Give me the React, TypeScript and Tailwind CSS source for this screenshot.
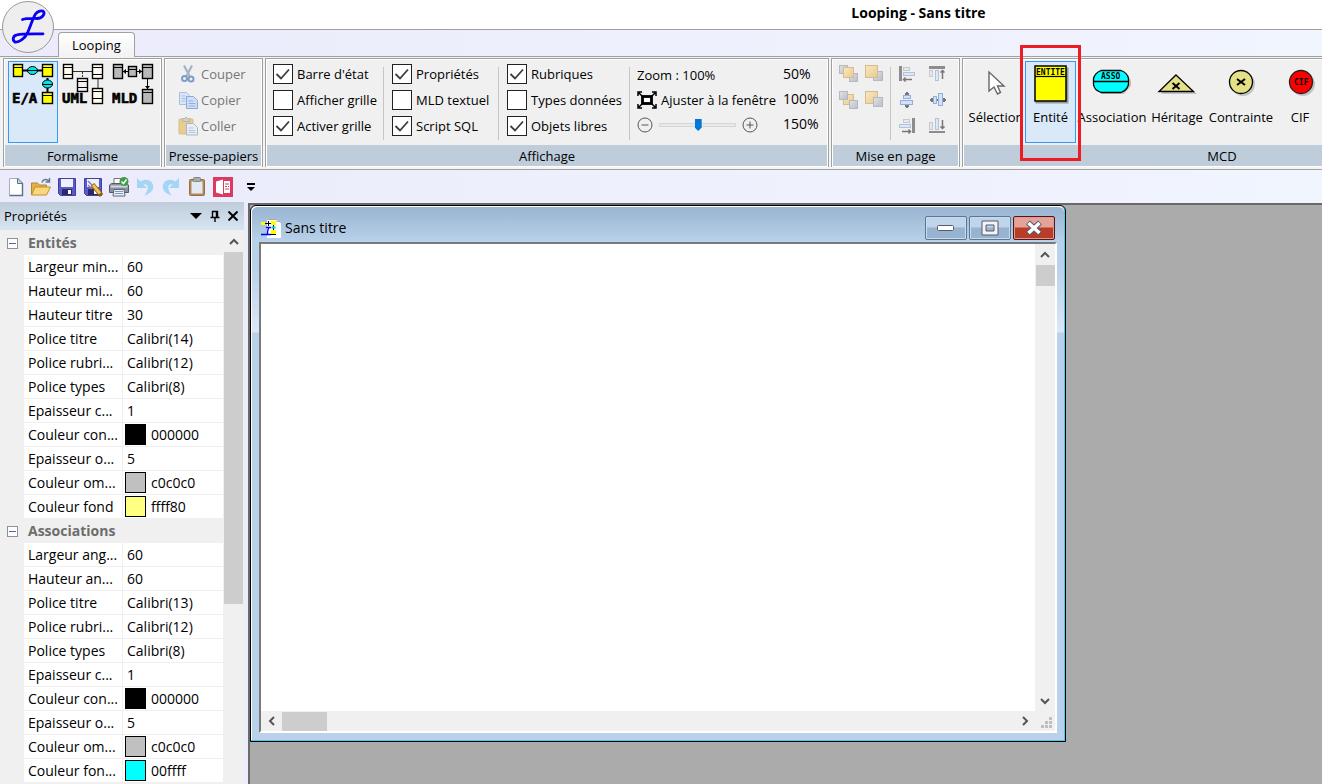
import type { ReactNode } from "react";

type Property = { name: string; value: string; color?: string };

const entites: Property[] = [
  { name: "Largeur min...", value: "60" },
  { name: "Hauteur mi...", value: "60" },
  { name: "Hauteur titre", value: "30" },
  { name: "Police titre", value: "Calibri(14)" },
  { name: "Police rubri...", value: "Calibri(12)" },
  { name: "Police types", value: "Calibri(8)" },
  { name: "Epaisseur c...", value: "1" },
  { name: "Couleur con...", value: "000000", color: "#000000" },
  { name: "Epaisseur o...", value: "5" },
  { name: "Couleur om...", value: "c0c0c0", color: "#c0c0c0" },
  { name: "Couleur fond", value: "ffff80", color: "#ffff80" },
];

const associations: Property[] = [
  { name: "Largeur ang...", value: "60" },
  { name: "Hauteur an...", value: "60" },
  { name: "Police titre", value: "Calibri(13)" },
  { name: "Police rubri...", value: "Calibri(12)" },
  { name: "Police types", value: "Calibri(8)" },
  { name: "Epaisseur c...", value: "1" },
  { name: "Couleur con...", value: "000000", color: "#000000" },
  { name: "Epaisseur o...", value: "5" },
  { name: "Couleur om...", value: "c0c0c0", color: "#c0c0c0" },
  { name: "Couleur fon...", value: "00ffff", color: "#00ffff" },
];

/* ---------- Icons ---------- */

function Logo() {
  return (
    <svg viewBox="0 0 52 52" className="size-[52px]" aria-hidden="true">
      <circle cx="26" cy="26" r="25.5" fill="#eeeeee" stroke="#9a9a9a" />
      <path
        d="M20.500 18.500C25 17 31 17.500 35 17.500C41 17 43 12.500 41.500 10.500C40 9 35.500 10 33.500 13C30.500 18 28.500 25 25.500 32C22.500 38 17 41.500 13 41C10 39 11 34.500 15 33.800C20 32.800 26 33 41 32.800"
        fill="none"
        stroke="#0a00f5"
        strokeWidth="2.8"
        strokeLinecap="round"
        strokeLinejoin="round"
      />
    </svg>
  );
}

function Box({ x, y, w, h, fill }: { x: number; y: number; w: number; h: number; fill: string }) {
  return (
    <g>
      <rect x={x + 0.5} y={y + 0.5} width={w - 1} height={h - 1} fill={fill} stroke="#000" strokeWidth="1.4" />
      <path d={`M${x} ${y + 3.5}h${w}`} stroke="#000" />
    </g>
  );
}

function PixelText({ children, x, y, size }: { children: string; x: number; y: number; size: number }) {
  return (
    <text x={x} y={y} fontSize={size} fontWeight="bold" fontFamily='"DejaVu Sans Mono", monospace' stroke="#000" strokeWidth={size > 10 ? 0.6 : 0}>
      {children}
    </text>
  );
}

function EaIcon() {
  return (
    <svg viewBox="0 0 42 42" className="size-[42px]" aria-hidden="true">
      <path d="M11 7.500H31M35.500 15V29" stroke="#000" strokeWidth="2" />
      <Box x={1} y={1} w={10} h={13} fill="#ffff00" />
      <Box x={30} y={1} w={11} h={13} fill="#ffff00" />
      <Box x={30} y={29} w={11} h={12} fill="#ffff00" />
      <ellipse cx="20.5" cy="7.5" rx="5" ry="4" fill="#00e5e5" stroke="#000" />
      <ellipse cx="35.500" cy="21" rx="5" ry="4" fill="#00e5e5" stroke="#000" />
      <path d="M15 7.500H26M30 21.500H41" stroke="#000" />
      <PixelText x={0} y={40} size={14}>E/A</PixelText>
    </svg>
  );
}

function UmlIcon() {
  return (
    <svg viewBox="0 0 42 42" className="size-[42px]" aria-hidden="true">
      <path d="M11 8.500H31M36 15V26" stroke="#333" />
      <path d="M20.500 9V16" stroke="#333" strokeDasharray="2 1" />
      <Box x={1} y={1} w={10} h={15} fill="#fffaf0" />
      <Box x={30} y={1} w={11} h={15} fill="#fffaf0" />
      <Box x={15} y={15} w={11} h={14} fill="#f5eeee" />
      <Box x={30} y={25} w={11} h={16} fill="#fffaf0" />
      <path d="M1 11.500H11M30 11.500H41M15 24.500H26M30 35.500H41" stroke="#000" />
      <PixelText x={0} y={40} size={14}>UML</PixelText>
    </svg>
  );
}

function MldIcon() {
  return (
    <svg viewBox="0 0 42 42" className="size-[42px]" aria-hidden="true">
      <path d="M11 8.500H31M35.500 15V26" stroke="#000" />
      <Box x={1} y={1} w={10} h={15} fill="#b8b8b8" />
      <Box x={30} y={1} w={11} h={15} fill="#b8b8b8" />
      <Box x={16} y={3} w={9} h={11} fill="#b8b8b8" />
      <Box x={30} y={26} w={11} h={15} fill="#b8b8b8" />
      <path d="M11 8.500l3 -2.500v5zM30 8.500l-3 -2.500v5zM35.500 26l-2.500 -3h5z" fill="#000" />
      <PixelText x={0} y={40} size={14}>MLD</PixelText>
    </svg>
  );
}

function CutIcon() {
  return (
    <svg viewBox="0 0 20 20" className="size-5" fill="none" aria-hidden="true">
      <path d="M6 1.500L11.500 12M14 1.500L8.500 12" stroke="#a3b4c6" strokeWidth="2.200" />
      <circle cx="6.500" cy="14.500" r="2.500" stroke="#7d9ccc" strokeWidth="2" />
      <circle cx="13" cy="15" r="2.500" stroke="#7d9ccc" strokeWidth="2" />
    </svg>
  );
}

function CopyIcon() {
  return (
    <svg viewBox="0 0 20 20" className="size-5" aria-hidden="true">
      <path d="M1.500 2.500h7l3 3v9h-10z" fill="#dbe6f8" stroke="#a9bee2" />
      <path d="M3.500 6h4M3.500 8.500h4M3.500 11h4" stroke="#a9bfe2" />
      <path d="M8.500 6.500h7l4 4v8h-11z" fill="#cfdff7" stroke="#8ea9d8" />
      <path d="M10.500 11h5M10.500 13.500h7M10.500 16h7" stroke="#93aede" />
    </svg>
  );
}

function PasteIcon() {
  return (
    <svg viewBox="0 0 20 20" className="size-5" aria-hidden="true">
      <rect x="1" y="3" width="14" height="15" rx="1" fill="#e8cd92" stroke="#d8bc82" />
      <path d="M4.500 5.500v-3h2l1.500-1.500l1.500 1.500h2v3z" fill="#d4d0c8" stroke="#b9b5ac" />
      <path d="M8.500 7.500h7l4 4v7.500h-11z" fill="#e9eef8" stroke="#a9b4c6" />
      <path d="M10.500 12h5M10.500 14.500h7M10.500 16.500h7" stroke="#b7c3d8" />
    </svg>
  );
}

function FitIcon() {
  return (
    <svg viewBox="0 0 20 18" className="h-[18px] w-5" aria-hidden="true">
      <path d="M1 5V1h4M15 1h4v4M19 13v4h-4M5 17H1v-4M2 2l3 3M18 2l-3 3M2 16l3-3M18 16l-3-3" fill="none" stroke="#000" strokeWidth="1.500" />
      <rect x="5.500" y="5.500" width="9" height="7" fill="#fff" stroke="#000" strokeWidth="2.800" />
    </svg>
  );
}

function Square({ x, y, s, fill, stroke }: { x: number; y: number; s: number; fill: string; stroke: string }) {
  return <rect x={x} y={y} width={s} height={s} fill={fill} stroke={stroke} />;
}

const grey = { fill: "url(#order-grey)", stroke: "#b4b9c1" };
const gold = { fill: "url(#order-gold)", stroke: "#d3bd90" };

function OrderIcon({ kind }: { kind: "forward" | "front" | "backward" | "back" }) {
  return (
    <svg viewBox="0 0 20 20" className="size-5" aria-hidden="true">
      <defs>
        <linearGradient id="order-grey" x2="1" y2="1">
          <stop stopColor="#e2e3e5" />
          <stop offset="1" stopColor="#b9bec6" />
        </linearGradient>
        <linearGradient id="order-gold" x2="1" y2="1">
          <stop stopColor="#fae8c0" />
          <stop offset="1" stopColor="#ebca8c" />
        </linearGradient>
      </defs>
      {kind === "forward" && (
        <>
          <Square x={0.5} y={1.5} s={8} {...grey} />
          <Square x={10.5} y={9.5} s={8} {...grey} />
          <Square x={4.5} y={3.5} s={10} {...gold} />
        </>
      )}
      {kind === "front" && (
        <>
          <Square x={8.5} y={7.5} s={9} {...grey} />
          <Square x={0.5} y={1.5} s={12} {...gold} />
        </>
      )}
      {kind === "backward" && (
        <>
          <Square x={4.5} y={4.5} s={10} {...gold} />
          <Square x={0.5} y={1.5} s={8} {...grey} />
          <Square x={10.5} y={10.5} s={8} {...grey} />
        </>
      )}
      {kind === "back" && (
        <>
          <Square x={0.5} y={1.5} s={12} {...gold} />
          <Square x={8.5} y={7.5} s={9} {...grey} />
        </>
      )}
    </svg>
  );
}

const bar = { fill: "#dde7f6", stroke: "#b3c2dc" };
const paleBar = { fill: "#e6e8ec", stroke: "#c6c9cf" };
const blueBar = { fill: "#d3e2f8", stroke: "#94aedb" };

function AlignIcon({ kind }: { kind: "left" | "top" | "centerH" | "centerV" | "right" | "bottom" }) {
  return (
    <svg viewBox="0 0 18 18" className="size-[18px]" fill="none" aria-hidden="true">
      {kind === "left" && (
        <>
          <rect x="0" y="1" width="3" height="15" fill="#8c8c8c" />
          <rect x="4.500" y="2.500" width="6" height="3" {...paleBar} />
          <rect x="4.500" y="7.500" width="11" height="3" {...bar} />
          <path d="M4 14.500h9M6.500 12.500l-2 2l2 2" stroke="#777" strokeWidth="1.500" />
        </>
      )}
      {kind === "top" && (
        <>
          <rect x="0" y="1" width="16" height="3" fill="#8c8c8c" />
          <rect x="0.500" y="5.500" width="3" height="6" {...paleBar} />
          <rect x="6.500" y="5.500" width="3" height="10" {...bar} />
          <path d="M13.500 14V5M11.500 7.500l2-2l2 2" stroke="#777" strokeWidth="1.500" />
        </>
      )}
      {kind === "centerH" && (
        <>
          <path d="M8 1v4M8 13v4M6 3h4M6 15h4" stroke="#777" strokeWidth="2" />
          <rect x="4.500" y="4.500" width="7" height="3" {...blueBar} />
          <rect x="1.500" y="9.500" width="12" height="4" {...blueBar} />
        </>
      )}
      {kind === "centerV" && (
        <>
          <path d="M1 9h16M3 7v4M15 7v4" stroke="#777" strokeWidth="2" />
          <rect x="4.500" y="5.500" width="3" height="7" {...blueBar} />
          <rect x="9.500" y="2.500" width="4" height="12" {...blueBar} />
        </>
      )}
      {kind === "right" && (
        <>
          <rect x="13" y="1" width="3" height="15" fill="#8c8c8c" />
          <rect x="4.500" y="2.500" width="6" height="3" {...paleBar} />
          <rect x="0.500" y="7.500" width="11" height="3" {...bar} />
          <path d="M3 14.500h9M9.500 12.500l2 2l-2 2" stroke="#777" strokeWidth="1.500" />
        </>
      )}
      {kind === "bottom" && (
        <>
          <rect x="0" y="14" width="16" height="2" fill="#8c8c8c" />
          <rect x="0.500" y="5.500" width="3" height="7" {...paleBar} />
          <rect x="6.500" y="1.500" width="3" height="11" {...bar} />
          <path d="M13.500 3v9M11.500 9.500l2 2l2-2" stroke="#777" strokeWidth="1.500" />
        </>
      )}
    </svg>
  );
}

function CursorIcon() {
  return (
    <svg viewBox="0 0 40 40" className="size-10" aria-hidden="true">
      <path d="M13 8v19l5-4l3.500 7l3-1.500l-3-6.500h6.500z" fill="#fff" stroke="#666" strokeWidth="1.400" />
    </svg>
  );
}

function EntiteIcon() {
  return (
    <svg viewBox="0 0 40 40" className="size-10" aria-hidden="true">
      <rect x="4.500" y="3.500" width="33" height="36" fill="#909a9e" />
      <rect x="4" y="2" width="31" height="35" fill="#ffff00" stroke="#000" strokeWidth="1.500" />
      <path d="M4 12.500h31" stroke="#000" strokeWidth="1.200" />
      <PixelText x={5} y={10.500} size={8}>ENTITE</PixelText>
    </svg>
  );
}

function AssociationIcon() {
  return (
    <svg viewBox="0 0 40 40" className="size-10" aria-hidden="true">
      <path d="M10 9h22l7 7v6l-7 8H10l-7-8v-6z" fill="#c4c4c4" />
      <path d="M9 6.500h20c4 1.500 7 5 7.500 8v6c-1 4-3.500 6.500-7.500 8H9c-4-1.500-7-4-7.500-8v-6c1-3.500 3.500-6.500 7.500-8z" fill="#00ffff" stroke="#000" strokeWidth="1.300" />
      <path d="M2 17.500h35" stroke="#000" strokeWidth="1.300" />
      <PixelText x={9} y={15} size={8}>ASSO</PixelText>
    </svg>
  );
}

function HeritageIcon() {
  return (
    <svg viewBox="0 0 40 40" className="size-10" aria-hidden="true">
      <path d="M20 12L40 30H4z" fill="#c4c4c4" />
      <path d="M19 11L36.500 27.500H2z" fill="#e4e085" stroke="#000" strokeWidth="1.300" />
      <path d="M15.500 19l7 6M22.500 19l-7 6" stroke="#000" strokeWidth="2" />
    </svg>
  );
}

function ContrainteIcon() {
  return (
    <svg viewBox="0 0 40 40" className="size-10" aria-hidden="true">
      <circle cx="22" cy="20" r="12" fill="#c4c4c4" />
      <circle cx="20" cy="18" r="11.500" fill="#e4e085" stroke="#000" strokeWidth="1.300" />
      <path d="M16 15l8 6M24 15l-8 6" stroke="#000" strokeWidth="2" />
    </svg>
  );
}

function CifIcon() {
  return (
    <svg viewBox="0 0 40 40" className="size-10" aria-hidden="true">
      <circle cx="23" cy="20" r="12" fill="#c4c4c4" />
      <circle cx="21" cy="18" r="11.500" fill="#ff0000" stroke="#222" strokeWidth="1.300" />
      <PixelText x={14} y={21} size={8}>CIF</PixelText>
    </svg>
  );
}

function NewIcon() {
  return (
    <svg viewBox="0 0 20 20" className="size-5" aria-hidden="true">
      <path d="M4.500 1.500h8l5 5v12h-13z" fill="#fff" stroke="#a3aebb" />
      <path d="M12.500 1.500l5 5v12h-13" fill="none" stroke="#5a7184" strokeWidth="1.400" />
      <path d="M12.500 1.500v5h5" fill="#c5d4e2" stroke="#5a7184" />
    </svg>
  );
}

function OpenIcon() {
  return (
    <svg viewBox="0 0 20 20" className="size-5" aria-hidden="true">
      <path d="M0.500 17V6h6l2 2h7v9z" fill="#e0b050" stroke="#b98524" />
      <path d="M4 10h15.500l-4 8H0.500z" fill="#fbd77c" stroke="#c28f2c" />
      <path d="M11 5.500c1-3.500 5-4 7-1M18.500 1v4h-4" fill="none" stroke="#5d7f9d" strokeWidth="1.500" />
    </svg>
  );
}

function SaveIcon({ edit = false }: { edit?: boolean }) {
  return (
    <svg viewBox="0 0 20 20" className="size-5" aria-hidden="true">
      <path d="M1.500 1.500h17v17h-15l-2-2z" fill="#5a5acb" stroke="#4040a0" />
      <rect x="4" y="2" width="12" height="8" fill="#eef1fb" />
      <rect x="5" y="12" width="10" height="6" fill="#2a2a66" />
      <rect x="11" y="13" width="3" height="4" fill="#fff" />
      {edit && <path d="M5 4l12 12M5 8l4 4" stroke="#7d86b8" strokeWidth="1.500" />}
      {edit && <path d="M9.500 7.500l9 11" stroke="#8a5a12" strokeWidth="4.500" />}
      {edit && <path d="M10 8l7 8.500" stroke="#f3c04e" strokeWidth="3" />}
    </svg>
  );
}

function PrintIcon() {
  return (
    <svg viewBox="0 0 20 20" className="size-5" aria-hidden="true">
      <path d="M5 8V1.500h9V8z" fill="#fff" stroke="#777" />
      <path d="M0.500 8l2-1.500h15l2 1.500v7.500h-19z" fill="#8a919e" stroke="#565c66" />
      <path d="M1.500 9.500h17" stroke="#d3d8e0" strokeWidth="2" />
      <path d="M5 12.500h10l1 6.500H4z" fill="#eef2f8" stroke="#666" />
      <path d="M6 14.500h8M6 16.500h8" stroke="#6c98d8" />
      <circle cx="15" cy="4.500" r="4.500" fill="#3f9a4a" />
      <path d="M12.500 4.500l2 2l3-4" fill="none" stroke="#fff" strokeWidth="1.500" />
    </svg>
  );
}

function UndoIcon({ flip = false }: { flip?: boolean }) {
  return (
    <svg viewBox="0 0 20 20" className={flip ? "size-5 -scale-x-100" : "size-5"} aria-hidden="true">
      <path d="M2 1v10h10l-3.500-3.500c5-1 6 4 1 11c9-3 11-9 6.500-14c-3-2.500-7-2.500-10.500 0z" fill="#a3d5f5" />
    </svg>
  );
}

function ClipboardIcon() {
  return (
    <svg viewBox="0 0 20 20" className="size-5" aria-hidden="true">
      <rect x="2.500" y="2.500" width="15" height="16" rx="1" fill="#b58a58" stroke="#94704a" />
      <rect x="4.500" y="4.500" width="11" height="12" fill="#e3e9f0" />
      <rect x="6.500" y="0.500" width="7" height="4" rx="1" fill="#aaa" stroke="#858585" />
    </svg>
  );
}

function ExportIcon() {
  return (
    <svg viewBox="0 0 20 20" className="size-5" aria-hidden="true">
      <rect width="20" height="20" fill="#dc3a5e" />
      <path d="M3 4.500l7-2v15l-7-2z" fill="#fff" />
      <rect x="11" y="4" width="6" height="12" fill="#fff" />
      <path d="M12 7h4M12 9.500h2M15 9.500h1M12 12h4" stroke="#dc3a5e" />
    </svg>
  );
}

function DocIcon() {
  return (
    <svg viewBox="0 0 20 20" className="size-5" aria-hidden="true">
      <path d="M6 1.500h10l4 4V20H6z" fill="#fff" />
      <path d="M6.500 1.500h9.500v2h3" fill="none" stroke="#aaa" />
      <path d="M0 4h4v3H0zM10 3h5v4h-5zM10 12h5v4h-5z" fill="#ffff00" />
      <path d="M4 5.500h6M7.500 3v5M12.500 7v5M10 16.500h5" stroke="#000" />
      <path d="M10.500 9.500h4" stroke="#00cccc" strokeWidth="2" />
      <path d="M6.500 16c0-3 0-5 2-7M0 16.500h10M5 9.500h5" fill="none" stroke="#0000f0" strokeWidth="1.300" />
    </svg>
  );
}

function Chevron({ dir }: { dir: "up" | "down" | "left" | "right" }) {
  const d = {
    up: "M2 8L6 4L10 8",
    down: "M2 4L6 8L10 4",
    left: "M8 2L4 6L8 10",
    right: "M4 2L8 6L4 10",
  };
  return (
    <svg viewBox="0 0 12 12" className="size-3" fill="none" aria-hidden="true">
      <path d={d[dir]} stroke="#555" strokeWidth="2" />
    </svg>
  );
}

/* ---------- Ribbon ---------- */

function RibbonGroup({ title, width, children }: { title: string; width: string; children: ReactNode }) {
  return (
    <section className={`flex shrink-0 flex-col border border-b-0 border-[#a0a0a0] bg-white p-px ${width}`}>
      <div className="flex h-[85px] bg-[#f0f0f0] pt-px">{children}</div>
      <h2 className="h-[21px] bg-[#bfcddb] text-center leading-[22px] whitespace-nowrap">{title}</h2>
    </section>
  );
}

function Check({ label, checked = false }: { label: string; checked?: boolean }) {
  return (
    <label className="relative flex h-[26px] items-center gap-1 whitespace-nowrap">
      <input
        type="checkbox"
        defaultChecked={checked}
        className="peer size-5 shrink-0 appearance-none border border-[#222] bg-white"
      />
      <svg viewBox="0 0 20 20" className="pointer-events-none invisible absolute left-0 size-5 peer-checked:visible" aria-hidden="true">
        <path d="M3.500 10L8 14.500L16 5.500" fill="none" stroke="#3c3c3c" strokeWidth="1.800" />
      </svg>
      {label}
    </label>
  );
}

function Separator() {
  return <div className="mt-[6px] h-[73px] w-px shrink-0 bg-[#c6c6c6]" />;
}

function Tool({ label, icon, width }: { label: string; icon: ReactNode; width: string }) {
  return (
    <button type="button" className={`flex h-[82px] shrink-0 flex-col items-center gap-[3px] whitespace-nowrap pt-[3px] ${width}`}>
      {icon}
      <span className="leading-5">{label}</span>
    </button>
  );
}

function Ribbon() {
  return (
    <div className="flex shrink-0 gap-[2px] border-y border-[#a0a0a0] bg-[#f4f4f4] pt-px pb-[2px] pl-[3px] text-[13px]">
      <RibbonGroup title="Formalisme" width="w-[159px]">
        <div className="flex pl-[3px]">
          <button type="button" aria-label="E/A" className="flex h-[82px] w-[50px] justify-center border border-[#3399ff] bg-[#d9e9f9] pt-px">
            <EaIcon />
          </button>
          <button type="button" aria-label="UML" className="flex h-[82px] w-[50px] justify-center pt-[2px]">
            <UmlIcon />
          </button>
          <button type="button" aria-label="MLD" className="flex h-[82px] w-[50px] justify-center pt-[2px]">
            <MldIcon />
          </button>
        </div>
      </RibbonGroup>

      <RibbonGroup title="Presse-papiers" width="w-[99px]">
        <div className="flex flex-col pl-3 text-[#777]">
          <button type="button" className="flex h-[26px] items-center gap-[3px]">
            <CutIcon />
            Couper
          </button>
          <button type="button" className="flex h-[26px] items-center gap-[3px]">
            <CopyIcon />
            Copier
          </button>
          <button type="button" className="flex h-[26px] items-center gap-[3px]">
            <PasteIcon />
            Coller
          </button>
        </div>
      </RibbonGroup>

      <RibbonGroup title="Affichage" width="w-[564px]">
        <div className="w-[116px] pl-[6px]">
          <Check label="Barre d'état" checked />
          <Check label="Afficher grille" />
          <Check label="Activer grille" checked />
        </div>
        <Separator />
        <div className="w-[114px] pl-2">
          <Check label="Propriétés" checked />
          <Check label="MLD textuel" />
          <Check label="Script SQL" checked />
        </div>
        <Separator />
        <div className="w-[130px] pl-2">
          <Check label="Rubriques" checked />
          <Check label="Types données" />
          <Check label="Objets libres" checked />
        </div>
        <Separator />
        <div className="w-[153px] pl-[7px]">
          <p className="h-[26px] leading-7">Zoom : 100%</p>
          <button type="button" className="flex h-[26px] items-center gap-1 whitespace-nowrap">
            <FitIcon />
            Ajuster à la fenêtre
          </button>
          <div className="flex h-6 items-center gap-[6px]">
            <button type="button" aria-label="Zoom arrière">
              <svg viewBox="0 0 16 16" className="size-4" fill="none" stroke="#555">
                <circle cx="8" cy="8" r="7" />
                <path d="M4.500 8h7" />
              </svg>
            </button>
            <input
              type="range"
              aria-label="Zoom"
              min={0}
              max={200}
              defaultValue={102}
              className="h-[14px] w-[77px] appearance-none bg-transparent [&::-webkit-slider-runnable-track]:h-1 [&::-webkit-slider-runnable-track]:border [&::-webkit-slider-runnable-track]:border-[#d6d6d6] [&::-webkit-slider-runnable-track]:bg-[#e7eaea] [&::-webkit-slider-thumb]:-mt-[5px] [&::-webkit-slider-thumb]:h-3 [&::-webkit-slider-thumb]:w-[7px] [&::-webkit-slider-thumb]:appearance-none [&::-webkit-slider-thumb]:bg-[#0078d7] [&::-webkit-slider-thumb]:[clip-path:polygon(0_0,100%_0,100%_70%,50%_100%,0_70%)]"
            />
            <button type="button" aria-label="Zoom avant">
              <svg viewBox="0 0 16 16" className="size-4" fill="none" stroke="#555">
                <circle cx="8" cy="8" r="7" />
                <path d="M4.500 8h7M8 4.500v7" />
              </svg>
            </button>
          </div>
        </div>
        <div className="flex flex-col items-start text-sm">
          <button type="button" className="h-[25px]">50%</button>
          <button type="button" className="h-[25px]">100%</button>
          <button type="button" className="h-[25px]">150%</button>
        </div>
      </RibbonGroup>

      <RibbonGroup title="Mise en page" width="w-[129px]">
        <div className="grid h-[52px] w-[57px] grid-cols-2 items-center gap-x-[6px] pr-[5px] pl-[6px]">
          <button type="button" aria-label="Avancer"><OrderIcon kind="forward" /></button>
          <button type="button" aria-label="Premier plan"><OrderIcon kind="front" /></button>
          <button type="button" aria-label="Reculer"><OrderIcon kind="backward" /></button>
          <button type="button" aria-label="Arrière-plan"><OrderIcon kind="back" /></button>
        </div>
        <Separator />
        <div className="grid h-[78px] grid-cols-2 items-center gap-x-3 pl-2">
          <button type="button" aria-label="Aligner à gauche"><AlignIcon kind="left" /></button>
          <button type="button" aria-label="Aligner en haut"><AlignIcon kind="top" /></button>
          <button type="button" aria-label="Centrer horizontalement"><AlignIcon kind="centerH" /></button>
          <button type="button" aria-label="Centrer verticalement"><AlignIcon kind="centerV" /></button>
          <button type="button" aria-label="Aligner à droite"><AlignIcon kind="right" /></button>
          <button type="button" aria-label="Aligner en bas"><AlignIcon kind="bottom" /></button>
        </div>
      </RibbonGroup>

      <RibbonGroup title="MCD" width="w-[520px]">
        <div className="flex pl-[3px]">
          <Tool label="Sélection" icon={<CursorIcon />} width="w-[58px]" />
          <div className="relative">
            <button type="button" className="flex h-[82px] w-[51px] flex-col items-center gap-[3px] border border-[#3399ff] bg-[#d9e9f9] pt-[2px]">
              <EntiteIcon />
              <span className="leading-5">Entité</span>
            </button>
            <div className="pointer-events-none absolute -inset-x-[5px] -top-4 -bottom-4 z-10 border-3 border-[#ed1c24]" />
          </div>
          <Tool label="Association" icon={<AssociationIcon />} width="w-[72px]" />
          <Tool label="Héritage" icon={<HeritageIcon />} width="w-[58px]" />
          <Tool label="Contrainte" icon={<ContrainteIcon />} width="w-[70px]" />
          <Tool label="CIF" icon={<CifIcon />} width="w-[48px]" />
        </div>
      </RibbonGroup>
    </div>
  );
}

/* ---------- Properties ---------- */

function PropertyRows({ title, rows }: { title: string; rows: Property[] }) {
  return (
    <tbody>
      <tr className="h-6 bg-[#f0f0f0] text-[#6d6d6d]">
        <td className="w-6 p-0">
          <button type="button" aria-label={`Réduire ${title}`} className="ml-[7px] flex size-[11px] items-center justify-center border border-[#919191] bg-white">
            <span className="h-px w-[7px] bg-[#4b63a7]" />
          </button>
        </td>
        <th colSpan={2} scope="rowgroup" className="p-0 pl-1 text-left font-bold">
          {title}
        </th>
      </tr>
      {rows.map((row) => (
        <tr key={row.name} className="h-6 bg-white">
          <td className="bg-[#f0f0f0] p-0" />
          <th scope="row" className="w-[99px] border-r border-b border-[#f0f0f0] p-0 pl-1 text-left font-normal whitespace-nowrap">
            {row.name}
          </th>
          <td className="border-b border-[#f0f0f0] p-0 pl-[2px]">
            <div className="flex items-center gap-[5px] pl-[2px]">
              {row.color && (
                <span className="-ml-[2px] h-[21px] w-[21px] border border-black" style={{ backgroundColor: row.color }} />
              )}
              {row.value}
            </div>
          </td>
        </tr>
      ))}
    </tbody>
  );
}

function PropertiesPanel() {
  return (
    <aside className="flex w-[244px] shrink-0 flex-col">
      <header className="flex h-7 shrink-0 items-center bg-linear-to-b from-[#bfcddb] to-[#d7e4f2] pl-1">
        <h2 className="grow text-[13px]">Propriétés</h2>
        <button type="button" aria-label="Menu" className="flex h-4 w-5 items-center justify-center">
          <svg viewBox="0 0 12 6" className="h-[6px] w-3"><path d="M0 0h12l-6 6z" /></svg>
        </button>
        <button type="button" aria-label="Épingler" className="flex h-4 w-[18px] items-center justify-center">
          <svg viewBox="0 0 10 12" className="h-3 w-[10px]" fill="none" stroke="#000">
            <path d="M2.500 1.500h5v6h-5zM0.500 7.500h9M5 8v4M6.500 2v5" strokeWidth="1.400" />
          </svg>
        </button>
        <button type="button" aria-label="Fermer" className="mr-[2px] flex h-4 w-[18px] items-center justify-center">
          <svg viewBox="0 0 10 10" className="size-[10px]"><path d="M0.500 0.500l9 9M9.500 0.500l-9 9" stroke="#000" strokeWidth="2" /></svg>
        </button>
      </header>
      <div className="flex min-h-0 grow overflow-hidden bg-[#f0f0f0] pt-px">
        <table className="grow self-start border-separate border-spacing-0 leading-[22px]">
          <PropertyRows title="Entités" rows={entites} />
          <PropertyRows title="Associations" rows={associations} />
        </table>
        <div className="flex w-[21px] shrink-0 flex-col items-center">
          <button type="button" aria-label="Défiler vers le haut" className="flex h-[21px] shrink-0 items-center">
            <Chevron dir="up" />
          </button>
          <div className="h-[352px] w-[19px] bg-[#cdcdcd]" />
        </div>
      </div>
    </aside>
  );
}

/* ---------- Document window ---------- */

function DocumentWindow() {
  return (
    <section className="absolute top-0 left-0 flex h-[537px] w-[816px] flex-col rounded-t-md border border-black bg-[linear-gradient(to_bottom,#b9d1ea_60px,#dbe7f5_126px,#b9d1ea_127px)] p-2 pt-0 shadow-[inset_-1px_-1px_0_#3cd0ee,inset_1px_1px_0_#fff]">
      <header className="-mx-[7px] flex h-[36px] shrink-0 items-center rounded-t-md border-t border-white bg-linear-to-b from-[#9ab5d2] to-[#b9d1ea] px-[9px] pt-[6px]">
        <DocIcon />
        <h1 className="grow pl-1">Sans titre</h1>
        <div className="flex gap-[2px]">
          <button type="button" aria-label="Réduire" className="flex h-6 w-[42px] items-center justify-center rounded-xs border border-[#5d7690] bg-linear-to-b from-[#c0d5eb] from-45% to-[#98b3cf] to-50% shadow-[inset_0_0_0_1px_#c8dcf0]">
            <svg viewBox="0 0 18 7" className="mt-[2px] h-[7px] w-[18px]"><rect x="0.500" y="0.500" width="16" height="5" rx="1" fill="#fff" stroke="#555b70" /></svg>
          </button>
          <button type="button" aria-label="Agrandir" className="flex h-6 w-[42px] items-center justify-center rounded-xs border border-[#5d7690] bg-linear-to-b from-[#c0d5eb] from-45% to-[#98b3cf] to-50% shadow-[inset_0_0_0_1px_#c8dcf0]">
            <svg viewBox="0 0 18 16" className="h-4 w-[18px]"><path d="M1 1h16v14H1zM5 5v6h8V5z" fill="#f4f4f4" fillRule="evenodd" stroke="#555b70" /></svg>
          </button>
          <button type="button" aria-label="Fermer la fenêtre" className="flex h-6 w-[42px] items-center justify-center rounded-xs border border-[#54151c] bg-linear-to-b from-[#e3a399] from-45% to-[#b93d26] to-50% shadow-[inset_0_0_0_1px_#e0998c]">
            <svg viewBox="0 0 18 16" className="h-4 w-[18px]">
              <path d="M3 2.500L15 13.500M15 2.500L3 13.500" stroke="#555b70" strokeWidth="5.500" />
              <path d="M3.500 3L14.500 13M14.500 3L3.500 13" stroke="#fff" strokeWidth="3.500" />
            </svg>
          </button>
        </div>
      </header>
      <div className="flex min-h-0 grow flex-col border-2 border-t-[#7a7a7a] border-r-white border-b-white border-l-[#7a7a7a] bg-white">
        <div className="flex min-h-0 grow">
          <div className="grow bg-white" />
          <div className="flex w-5 flex-col items-center bg-[#f0f0f0]">
            <button type="button" aria-label="Haut" className="flex h-[21px] items-center"><Chevron dir="up" /></button>
            <div className="h-[21px] w-[19px] bg-[#cdcdcd]" />
            <button type="button" aria-label="Bas" className="mt-auto flex h-[21px] items-center"><Chevron dir="down" /></button>
          </div>
        </div>
        <div className="flex h-5 shrink-0 items-center bg-[#f0f0f0]">
          <button type="button" aria-label="Gauche" className="flex w-[21px] justify-center"><Chevron dir="left" /></button>
          <div className="h-[19px] w-[45px] bg-[#cdcdcd]" />
          <button type="button" aria-label="Droite" className="ml-auto flex w-[21px] justify-center"><Chevron dir="right" /></button>
          <svg viewBox="0 0 20 20" className="size-5" fill="#bfbfbf" aria-hidden="true">
            <path d="M14 6h3v3h-3zM10 10h3v3h-3zM14 10h3v3h-3zM6 14h3v3h-3zM10 14h3v3h-3zM14 14h3v3h-3z" />
          </svg>
        </div>
      </div>
    </section>
  );
}

export default function App() {
  return (
    <div className="flex h-screen flex-col overflow-hidden bg-linear-to-r from-[#ebebfb] to-[#f1f5fe] font-['Open_Sans','Noto_Sans',sans-serif] text-sm text-black">
      {/* Title bar */}
      <header className="relative flex h-[30px] shrink-0 justify-center border-b border-[#a0a0a0] bg-white">
        <p className="pl-[515px] text-sm leading-[26px] font-bold">Looping - Sans titre</p>
        <button type="button" aria-label="Menu principal" className="absolute top-px left-[2px]">
          <Logo />
        </button>
      </header>

      {/* Tabs */}
      <nav className="flex h-[26px] shrink-0 items-end pl-[58px]">
        <button type="button" className="z-10 -mb-px h-[25px] rounded-t-sm border border-b-0 border-[#a0a0a0] bg-linear-to-b from-white to-[#f2f2f2] px-[13px] text-[13px]">
          Looping
        </button>
      </nav>

      <Ribbon />

      {/* Quick access */}
      <div className="flex h-8 shrink-0 items-center gap-[6px] pt-[2px] pl-[5px]">
        <button type="button" aria-label="Nouveau"><NewIcon /></button>
        <button type="button" aria-label="Ouvrir"><OpenIcon /></button>
        <button type="button" aria-label="Enregistrer"><SaveIcon /></button>
        <button type="button" aria-label="Enregistrer sous"><SaveIcon edit /></button>
        <button type="button" aria-label="Imprimer"><PrintIcon /></button>
        <button type="button" aria-label="Annuler"><UndoIcon /></button>
        <button type="button" aria-label="Rétablir"><UndoIcon flip /></button>
        <button type="button" aria-label="Presse-papiers"><ClipboardIcon /></button>
        <button type="button" aria-label="Exporter"><ExportIcon /></button>
        <button type="button" aria-label="Personnaliser" className="ml-2">
          <svg viewBox="0 0 8 8" className="size-2"><path d="M0 0h8v2H0zM0 4h8l-4 4z" /></svg>
        </button>
      </div>

      {/* Workspace */}
      <div className="flex min-h-0 grow gap-1">
        <PropertiesPanel />
        <main className="relative mt-px grow border-t-2 border-l-2 border-[#696969] bg-[#ababab]">
          <DocumentWindow />
        </main>
      </div>
    </div>
  );
}
